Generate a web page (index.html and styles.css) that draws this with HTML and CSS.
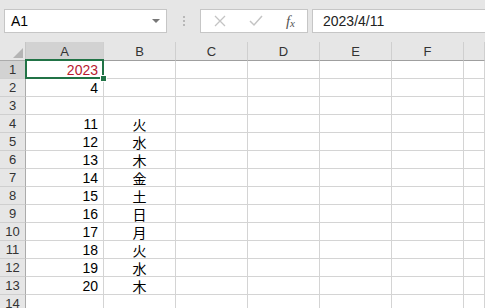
FILE: index.html
```html
<!DOCTYPE html>
<html lang="ja">
<head>
    <meta charset="UTF-8">
    <title>Book1</title>
    <link rel="stylesheet" href="styles.css">
</head>
<body>
    <div class="formula-bar">
        <div class="name-box">
            <span>A1</span>
            <span class="drop"></span>
        </div>
        <div class="grip"><i></i><i></i><i></i></div>
        <div class="fx-buttons">
            <svg width="12" height="12" viewBox="0 0 12 12"><path d="M1 1 L11 11 M11 1 L1 11" stroke="#c4c4c4" stroke-width="1.3" fill="none"/></svg>
            <svg width="14" height="12" viewBox="0 0 14 12"><path d="M1 6 L5 10 L13 1" stroke="#c4c4c4" stroke-width="1.5" fill="none"/></svg>
            <span class="fx">f<span class="x">x</span></span>
        </div>
        <div class="formula-input">2023/4/11</div>
    </div>

    <div class="sheet">
        <div class="corner"><span class="tri"></span></div>
        <div class="col-head active">A</div>
        <div class="col-head">B</div>
        <div class="col-head">C</div>
        <div class="col-head">D</div>
        <div class="col-head">E</div>
        <div class="col-head">F</div>
        <div class="col-head"></div>
    </div>

    <script>
        const rows = [
            ['2023', ''], ['4', ''], ['', ''],
            ['11', '火'], ['12', '水'], ['13', '木'], ['14', '金'], ['15', '土'],
            ['16', '日'], ['17', '月'], ['18', '火'], ['19', '水'], ['20', '木'], ['', '']
        ];
        const sheet = document.querySelector('.sheet');
        rows.forEach((r, i) => {
            let html = `<div class="row-head${i === 0 ? ' active' : ''}">${i + 1}</div>`;
            html += `<div class="cell num${i === 0 ? ' selected red' : ''}">${r[0]}</div>`;
            html += `<div class="cell kanji">${r[1]}</div>`;
            for (let c = 0; c < 5; c++) html += '<div class="cell"></div>';
            sheet.insertAdjacentHTML('beforeend', html);
        });
    </script>
</body>
</html>
```

FILE: styles.css
```css
body {
    margin: 0;
    width: 485px;
    height: 308px;
    overflow: hidden;
    background: #fff;
    font-family: "Liberation Sans", "Noto Sans CJK JP", sans-serif;
    color: #000;
}
.formula-bar {
    height: 42px;
    box-sizing: border-box;
    padding: 9px 0 0 4px;
    background: #e6e6e6;
    display: flex;
    align-items: flex-start;
}
.name-box,
.fx-buttons,
.formula-input {
    height: 24px;
    box-sizing: border-box;
    background: #fff;
    border: 1px solid #c6c6c6;
    display: flex;
    align-items: center;
    font-size: 14px;
}
.name-box {
    width: 163px;
    padding: 0 6px;
    justify-content: space-between;
}
.drop {
    width: 0;
    height: 0;
    border-left: 4px solid transparent;
    border-right: 4px solid transparent;
    border-top: 4px solid #777;
}
.grip {
    width: 33px;
    height: 24px;
    display: flex;
    flex-direction: column;
    align-items: center;
    justify-content: center;
    gap: 2px;
}
.grip i {
    width: 2px;
    height: 2px;
    background: #b8b8b8;
}
.fx-buttons {
    width: 108px;
    padding: 0 12px 0 13px;
    justify-content: space-between;
}
.fx {
    font-family: "Liberation Serif", serif;
    font-style: italic;
    font-size: 15px;
    color: #555;
}
.fx .x {
    font-size: 11px;
    position: relative;
    top: 1px;
}
.formula-input {
    flex: 1;
    margin-left: 4px;
    padding-left: 10px;
    border-right: none;
    color: #222;
}
.sheet {
    display: grid;
    grid-template-columns: 26px 78px 72px 72px 72px 72px 72px 1fr;
    grid-auto-rows: 18px;
    grid-template-rows: 19px;
    font-size: 14px;
}
.corner,
.col-head,
.row-head {
    box-sizing: border-box;
    background: #e6e6e6;
    color: #333;
    font-size: 13px;
    display: flex;
    align-items: center;
    justify-content: center;
}
.corner {
    border-right: 1px solid #c6c6c6;
    border-bottom: 1px solid #ababab;
    align-items: flex-end;
    justify-content: flex-end;
    padding: 0 2px 2px 0;
}
.tri {
    width: 0;
    height: 0;
    border-left: 10px solid transparent;
    border-bottom: 10px solid #b4b4b4;
}
.col-head {
    border-right: 1px solid #cfcfcf;
    border-bottom: 1px solid #9f9f9f;
    padding-top: 1px;
}
.row-head {
    border-right: 1px solid #ababab;
    border-bottom: 1px solid #cfcfcf;
}
.col-head.active,
.row-head.active {
    background: #d2d2d2;
}
.cell {
    box-sizing: border-box;
    border-right: 1px solid #d4d4d4;
    border-bottom: 1px solid #d4d4d4;
    display: flex;
    align-items: center;
}
.num {
    justify-content: flex-end;
    padding-right: 5px;
}
.kanji {
    justify-content: center;
}
.red {
    color: #b8192f;
}
.selected {
    position: relative;
}
.selected::before {
    content: "";
    position: absolute;
    left: -1px;
    top: -2px;
    right: -1px;
    bottom: -1px;
    border: 2px solid #217346;
}
.selected::after {
    content: "";
    position: absolute;
    right: -4px;
    bottom: -4px;
    width: 5px;
    height: 5px;
    background: #217346;
    border: 1px solid #fff;
}
```
